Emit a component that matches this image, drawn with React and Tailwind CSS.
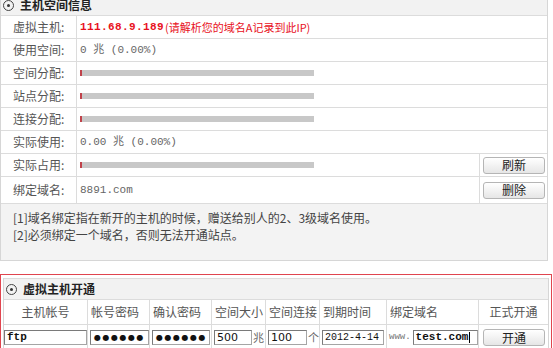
import React from 'react';

const cjk = { fontFamily: '"Noto Sans CJK SC", "Liberation Sans", sans-serif' };
const mono = { fontFamily: '"Liberation Mono", "Noto Sans CJK SC", monospace' };
const dejavu = { fontFamily: '"DejaVu Sans", sans-serif' };

const Dot = () => (
  <span className="inline-flex w-[11px] h-[11px] rounded-full border border-[#444] items-center justify-center mr-[6px]">
    <span className="w-[3px] h-[3px] rounded-full bg-[#333]" />
  </span>
);

const Bar = () => (
  <div className="w-[234px] h-[6px] bg-[#c8c8c8] flex">
    <div className="w-[2px] h-full bg-[#c0424a]" />
  </div>
);

const Btn = ({ children }) => (
  <button className="w-[62px] h-[17px] rounded-[3px] border border-[#b5b5b5] bg-gradient-to-b from-white to-[#e6e6e6] text-[12px] leading-none text-[#222] flex items-center justify-center">
    {children}
  </button>
);

const Row = ({ label, children, btn, h = 'h-[23px]' }) => (
  <div className={`flex ${h} border-b border-[#dcdcdc]`}>
    <div className="w-[76px] shrink-0 border-r border-[#dcdcdc] pl-[12px] flex items-center text-[12px] text-[#555]">
      {label}:
    </div>
    <div className="flex-1 pl-[3px] flex items-center text-[12px] text-[#666]">{children}</div>
    {btn && (
      <div className="w-[68px] shrink-0 border-l border-[#dcdcdc] flex items-center pl-[3px]">
        <Btn>{btn}</Btn>
      </div>
    )}
  </div>
);

const Input = ({ w, children, className = '' }) => (
  <div
    className={`${w} h-[15px] border border-[#a5a5a5] border-t-[#7a7a7a] border-l-[#7a7a7a] bg-white flex items-center pl-[2px] text-[11px] leading-none text-[#111] whitespace-nowrap overflow-hidden ${className}`}
  >
    {children}
  </div>
);

const Secret = () => (
  <span className="text-[8px] tracking-[1.5px] pl-[1px]" style={dejavu}>
    ●●●●●●
  </span>
);

const cols = [
  { title: '主机帐号', w: 'w-[84px]', center: true },
  { title: '帐号密码', w: 'w-[62px]' },
  { title: '确认密码', w: 'w-[62px]' },
  { title: '空间大小', w: 'w-[54px]' },
  { title: '空间连接', w: 'w-[54px]' },
  { title: '到期时间', w: 'w-[67px]' },
  { title: '绑定域名', w: 'w-[92px]' },
  { title: '正式开通', w: 'flex-1', center: true },
];

export default function App() {
  return (
    <div className="w-[553px] h-[348px] overflow-hidden bg-white" style={cjk}>
      <div className="w-[548px] -mt-[5px] border-x border-[#d6d6d6]">
        <div className="h-[21px] bg-[#f2f2f2] border-b border-[#dcdcdc] flex items-center pl-[2px] text-[12px] font-bold text-[#222]">
          <Dot />
          主机空间信息
        </div>
        <Row label="虚拟主机">
          <span className="text-[#e8101c] font-bold text-[11px] tracking-[0.4px]" style={mono}>
            111.68.9.189
          </span>
          <span className="text-[#e8101c] text-[11px] ml-[1px]">(请解析您的域名A记录到此IP)</span>
        </Row>
        <Row label="使用空间">
          <span className="text-[11px]" style={mono}>0 兆 (0.00%)</span>
        </Row>
        <Row label="空间分配"><Bar /></Row>
        <Row label="站点分配"><Bar /></Row>
        <Row label="连接分配"><Bar /></Row>
        <Row label="实际使用">
          <span className="text-[11px]" style={mono}>0.00 兆 (0.00%)</span>
        </Row>
        <Row label="实际占用" btn="刷新"><Bar /></Row>
        <Row label="绑定域名" btn="删除" h="h-[27px]">
          <span className="text-[11px]" style={mono}>8891.com</span>
        </Row>
        <div className="h-[57px] bg-[#f3f3f3] border-b border-[#d6d6d6] pl-[12px] pt-[5px] text-[12px] leading-[17px] text-[#444]">
          <div>[1]域名绑定指在新开的主机的时候，赠送给别人的2、3级域名使用。</div>
          <div>[2]必须绑定一个域名，否则无法开通站点。</div>
        </div>
      </div>

      <div className="w-[552px] mt-[13px] border border-[#e0454f] px-[2px] pt-[3px]">
        <div className="border-x border-[#d6d6d6]">
          <div className="h-[22px] bg-[#f2f2f2] border-y border-[#dcdcdc] flex items-center pl-[2px] text-[12px] font-bold text-[#222]">
            <Dot />
            虚拟主机开通
          </div>
          <div className="flex h-[25px] border-b border-[#dcdcdc] text-[12px] text-[#555]">
            {cols.map((c, i) => (
              <div
                key={c.title}
                className={`${c.w} shrink-0 flex items-center ${c.center ? 'justify-center' : 'pl-[3px]'} ${i < cols.length - 1 ? 'border-r border-[#dcdcdc]' : ''}`}
              >
                {c.title}
              </div>
            ))}
          </div>
          <div className="flex h-[25px] items-center text-[12px]">
            <div className="w-[84px] shrink-0 h-full flex items-center border-r border-[#dcdcdc]">
              <Input w="w-[83px]" className="font-bold">
                <span style={mono}>ftp</span>
              </Input>
            </div>
            <div className="w-[62px] shrink-0 h-full flex items-center border-r border-[#dcdcdc] pl-[2px]">
              <Input w="w-[59px]"><Secret /></Input>
            </div>
            <div className="w-[62px] shrink-0 h-full flex items-center border-r border-[#dcdcdc] pl-[2px]">
              <Input w="w-[58px]"><Secret /></Input>
            </div>
            <div className="w-[54px] shrink-0 h-full flex items-center border-r border-[#dcdcdc] pl-[2px] gap-[1px]">
              <Input w="w-[38px]"><span style={dejavu}>500</span></Input>
              <span className="text-[11px] text-[#666]">兆</span>
            </div>
            <div className="w-[54px] shrink-0 h-full flex items-center border-r border-[#dcdcdc] pl-[2px] gap-[1px]">
              <Input w="w-[39px]"><span style={dejavu}>100</span></Input>
              <span className="text-[11px] text-[#666]">个</span>
            </div>
            <div className="w-[67px] shrink-0 h-full flex items-center border-r border-[#dcdcdc] pl-[2px]">
              <Input w="w-[62px]"><span className="text-[10px]" style={mono}>2012-4-14</span></Input>
            </div>
            <div className="w-[92px] shrink-0 h-full flex items-center border-r border-[#dcdcdc] pl-[2px] gap-[2px]">
              <span className="text-[9px] text-[#777]" style={mono}>www.</span>
              <Input w="w-[65px]" className="font-bold">
                <span style={mono}>test.com</span>
                <span className="w-px h-[11px] bg-black ml-[1px]" />
              </Input>
            </div>
            <div className="flex-1 h-full flex items-center pl-[4px]">
              <Btn>开通</Btn>
            </div>
          </div>
        </div>
      </div>
    </div>
  );
}
